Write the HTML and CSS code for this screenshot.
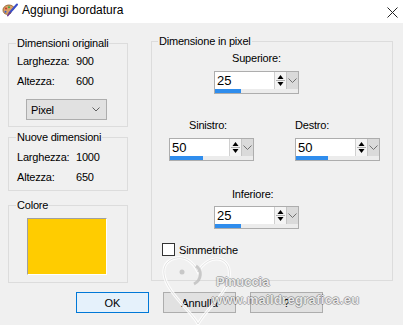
FILE: index.html
```html
<!DOCTYPE html>
<html lang="it">
<head>
    <meta charset="UTF-8">
    <meta name="viewport" content="width=device-width, initial-scale=1.0">
    <title>Aggiungi bordatura</title>
    <link rel="stylesheet" href="styles.css">
</head>
<body>
    <div class="dialog">
        <div class="titlebar">
            <svg class="app-icon" width="17" height="15" viewBox="0 0 17 15">
                <path d="M2 7c0-3 3-5 6-5 3 0 5 1.5 5 3.5 0 1.5-1.5 1.5-2.5 2-1 .5 0 2-1 3-1.5 1.5-7.5 1.5-7.5-3.5z" fill="#d9a066" stroke="#8a5a2b" stroke-width=".8"/>
                <circle cx="5" cy="5.5" r="1.1" fill="#d23b2a"/>
                <circle cx="8" cy="4.3" r="1" fill="#3aa640"/>
                <circle cx="4.5" cy="8.8" r="1" fill="#2e5fd0"/>
                <path d="M16 1.5L8.5 10" stroke="#3b4fc8" stroke-width="2" stroke-linecap="round"/>
                <path d="M9 9.5L6.8 12.6" stroke="#6b3a8c" stroke-width="1.6" stroke-linecap="round"/>
            </svg>
            <span class="title">Aggiungi bordatura</span>
            <svg class="close" width="11" height="11" viewBox="0 0 11 11">
                <path d="M0.5 0.5L10.5 10.5M10.5 0.5L0.5 10.5" stroke="#222" stroke-width="1"/>
            </svg>
        </div>

        <div class="main">
            <div class="left-col">
                <fieldset class="group group-orig">
                    <legend>Dimensioni originali</legend>
                    <div class="row"><span class="key">Larghezza:</span><span>900</span></div>
                    <div class="row"><span class="key">Altezza:</span><span>600</span></div>
                    <div class="combo">
                        <span>Pixel</span>
                        <svg width="8" height="5" viewBox="0 0 8 5"><path d="M0.5 0.5L4 4L7.5 0.5" fill="none" stroke="#606060"/></svg>
                    </div>
                </fieldset>

                <fieldset class="group group-new">
                    <legend>Nuove dimensioni</legend>
                    <div class="row"><span class="key">Larghezza:</span><span>1000</span></div>
                    <div class="row"><span class="key">Altezza:</span><span>650</span></div>
                </fieldset>

                <fieldset class="group group-color">
                    <legend>Colore</legend>
                    <div class="swatch"></div>
                </fieldset>
            </div>

            <fieldset class="group group-pixel">
                <legend>Dimensione in pixel</legend>

                <div class="side side-center">
                    <div class="lbl lbl-indent">Superiore:</div>
                    <div class="spin">
                        <div class="spin-top">
                            <span class="spin-value">25</span>
                            <span class="spin-arrows">
                                <svg width="9" height="15" viewBox="0 0 9 15"><path d="M4.5 2L1.5 6H7.5Z M4.5 13L1.5 9H7.5Z" fill="#000"/><path d="M0 7.5H9" stroke="#b0b0b0"/></svg>
                            </span>
                            <span class="spin-drop">
                                <svg width="9" height="5" viewBox="0 0 9 5"><path d="M0.5 0.5L4.5 4.5L8.5 0.5" fill="none" stroke="#707070"/></svg>
                            </span>
                        </div>
                        <div class="spin-track"><div class="spin-fill" style="width: 26px"></div></div>
                    </div>
                </div>

                <div class="side-pair">
                    <div class="side">
                        <div class="lbl lbl-left">Sinistro:</div>
                        <div class="spin">
                            <div class="spin-top">
                                <span class="spin-value">50</span>
                                <span class="spin-arrows">
                                    <svg width="9" height="15" viewBox="0 0 9 15"><path d="M4.5 2L1.5 6H7.5Z M4.5 13L1.5 9H7.5Z" fill="#000"/><path d="M0 7.5H9" stroke="#b0b0b0"/></svg>
                                </span>
                                <span class="spin-drop">
                                    <svg width="9" height="5" viewBox="0 0 9 5"><path d="M0.5 0.5L4.5 4.5L8.5 0.5" fill="none" stroke="#707070"/></svg>
                                </span>
                            </div>
                            <div class="spin-track"><div class="spin-fill" style="width: 33px"></div></div>
                        </div>
                    </div>
                    <div class="side">
                        <div class="lbl">Destro:</div>
                        <div class="spin">
                            <div class="spin-top">
                                <span class="spin-value">50</span>
                                <span class="spin-arrows">
                                    <svg width="9" height="15" viewBox="0 0 9 15"><path d="M4.5 2L1.5 6H7.5Z M4.5 13L1.5 9H7.5Z" fill="#000"/><path d="M0 7.5H9" stroke="#b0b0b0"/></svg>
                                </span>
                                <span class="spin-drop">
                                    <svg width="9" height="5" viewBox="0 0 9 5"><path d="M0.5 0.5L4.5 4.5L8.5 0.5" fill="none" stroke="#707070"/></svg>
                                </span>
                            </div>
                            <div class="spin-track"><div class="spin-fill" style="width: 32px"></div></div>
                        </div>
                    </div>
                </div>

                <div class="side side-center side-bottom">
                    <div class="lbl lbl-indent">Inferiore:</div>
                    <div class="spin">
                        <div class="spin-top">
                            <span class="spin-value">25</span>
                            <span class="spin-arrows">
                                <svg width="9" height="15" viewBox="0 0 9 15"><path d="M4.5 2L1.5 6H7.5Z M4.5 13L1.5 9H7.5Z" fill="#000"/><path d="M0 7.5H9" stroke="#b0b0b0"/></svg>
                            </span>
                            <span class="spin-drop">
                                <svg width="9" height="5" viewBox="0 0 9 5"><path d="M0.5 0.5L4.5 4.5L8.5 0.5" fill="none" stroke="#707070"/></svg>
                            </span>
                        </div>
                        <div class="spin-track"><div class="spin-fill" style="width: 26px"></div></div>
                    </div>
                </div>

                <label class="check">
                    <span class="box"></span>
                    <span>Simmetriche</span>
                </label>
            </fieldset>
        </div>

        <div class="buttons">
            <button class="btn btn-default">OK</button>
            <button class="btn">Annulla</button>
            <button class="btn">?</button>
        </div>

        <!-- watermark -->
        <div class="watermark">
            <svg class="wm-heart" width="80" height="75" viewBox="0 0 80 75">
                <path d="M40 72C34 60 8 40 6 22 4 8 20 2 30 8 36 12 38 16 40 20 44 12 54 4 64 8 76 14 72 32 62 44 54 54 46 62 40 72Z" fill="none" stroke="rgba(255,255,255,0.85)" stroke-width="3"/>
                <path d="M40 72C34 60 8 40 6 22 4 8 20 2 30 8 36 12 38 16 40 20 44 12 54 4 64 8 76 14 72 32 62 44 54 54 46 62 40 72Z" fill="none" stroke="rgba(0,0,0,0.1)" stroke-width="1"/>
                <circle cx="24" cy="20" r="2.5" fill="rgba(190,190,190,0.8)"/>
                <path d="M38 14C44 18 44 28 36 32" fill="none" stroke="rgba(190,190,190,0.8)" stroke-width="3"/>
            </svg>
            <div class="wm-name">Pinuccia</div>
            <div class="wm-site">www.maildregrafica.eu</div>
        </div>
    </div>
</body>
</html>
```

FILE: styles.css
```css
body {
    margin: 0;
    padding: 0;
    font-family: "Liberation Sans", Arial, sans-serif;
    font-size: 11px;
    color: #000;
    background-color: #f0f0f0;
}
.dialog {
    position: relative;
    width: 403px;
    height: 325px;
    overflow: hidden;
    background-color: #f0f0f0;
}
.titlebar {
    display: flex;
    align-items: flex-start;
    height: 23px;
    background-color: white;
}
.app-icon {
    margin: 3px 4px 0 1px;
}
.title {
    flex: 1;
    font-size: 12px;
    line-height: 15px;
    padding-top: 3px;
}
.close {
    margin: 7px 5px 0 0;
}
.main {
    display: flex;
    align-items: flex-start;
    gap: 23px;
    padding: 11px 0 0 8px;
}
.left-col {
    display: flex;
    flex-direction: column;
    width: 120px;
    margin-top: 2px;
}
.group {
    box-sizing: border-box;
    min-width: 0;
    margin: 0;
    border: 1px solid #dcdcdc;
    letter-spacing: -0.2px;
}
.group legend {
    padding: 0 1px;
    margin-left: 7px;
    line-height: 14px;
}
.row {
    display: flex;
    height: 14px;
    line-height: 14px;
    margin-left: 8px;
}
.row + .row {
    margin-top: 6px;
}
.key {
    width: 59px;
}
.group-orig {
    width: 120px;
    padding: 4px 0 6px 0;
}
.combo {
    box-sizing: border-box;
    display: flex;
    align-items: center;
    justify-content: space-between;
    width: 81px;
    height: 21px;
    margin: 11px 0 0 17px;
    padding: 0 6px 0 4px;
    background-color: #e1e1e1;
    border: 1px solid #adadad;
    line-height: 14px;
}
.group-new {
    width: 120px;
    margin-top: 3px;
    padding: 6px 0 6px 0;
}
.group-color {
    width: 120px;
    margin-top: 7px;
    padding: 6px 0 7px 0;
}
.swatch {
    box-sizing: border-box;
    width: 80px;
    height: 57px;
    margin-left: 18px;
    background-color: #ffcc00;
    border-top: 1px solid #a0a0a0;
    border-left: 1px solid #a0a0a0;
    border-right: 1px solid #fff;
    border-bottom: 1px solid #fff;
}
.group-pixel {
    width: 242px;
    padding: 0 0 24px 0;
}
.group-pixel legend {
    margin-left: 6px;
}
.side {
    display: flex;
    flex-direction: column;
    width: 85px;
}
.side-center {
    margin: 3px 0 0 62px;
}
.side-bottom {
    margin-top: 26px;
}
.side-pair {
    display: flex;
    gap: 41px;
    margin: 24px 0 0 17px;
}
.lbl {
    height: 14px;
    line-height: 14px;
    margin-bottom: 6px;
    white-space: nowrap;
}
.lbl-indent {
    padding-left: 18px;
}
.lbl-left {
    padding-left: 20px;
}
.side-bottom .lbl {
    margin-bottom: 5px;
}
.spin {
    box-sizing: border-box;
    width: 85px;
    height: 23px;
    border: 1px solid #adadad;
    background-color: white;
    letter-spacing: 0;
}
.spin-top {
    display: flex;
    height: 17px;
}
.spin-value {
    flex: 1;
    padding-left: 2px;
    font-size: 13px;
    line-height: 17px;
}
.spin-arrows {
    display: flex;
    align-items: center;
    width: 11px;
    justify-content: center;
    background-color: #f4f4f4;
    border-left: 1px solid #d0d0d0;
}
.spin-drop {
    display: flex;
    align-items: center;
    justify-content: center;
    width: 11px;
    background-color: #dadada;
    border-left: 1px solid #c4c4c4;
}
.spin-track {
    height: 4px;
    background-color: #ececec;
}
.spin-fill {
    height: 4px;
    background-color: #2f8ded;
}
.check {
    display: flex;
    align-items: center;
    gap: 4px;
    margin: 14px 0 0 10px;
    height: 13px;
    line-height: 14px;
}
.check .box {
    box-sizing: border-box;
    width: 13px;
    height: 13px;
    border: 1px solid #333;
    background-color: white;
}
.buttons {
    display: flex;
    gap: 14px;
    margin-top: 9px;
    padding-left: 76px;
}
.btn {
    box-sizing: border-box;
    width: 73px;
    height: 21px;
    padding: 0;
    font-family: "Liberation Sans", Arial, sans-serif;
    font-size: 11px;
    color: #000;
    background-color: #e1e1e1;
    border: 1px solid #adadad;
}
.btn-default {
    background-color: #e5f1fb;
    border-color: #0078d7;
}
/* Watermark */
.watermark {
    position: absolute;
    left: 0;
    top: 0;
    width: 403px;
    height: 325px;
    pointer-events: none;
}
.wm-heart {
    position: absolute;
    left: 158px;
    top: 252px;
}
.wm-name,
.wm-site {
    position: absolute;
    font-weight: bold;
    font-size: 13px;
    color: rgba(255, 255, 255, 0.85);
    text-shadow: 1px 0 0 rgba(0, 0, 0, 0.25), -1px 0 0 rgba(0, 0, 0, 0.25), 0 1px 0 rgba(0, 0, 0, 0.25), 0 -1px 0 rgba(0, 0, 0, 0.25);
}
.wm-name {
    left: 216px;
    top: 274px;
}
.wm-site {
    left: 212px;
    top: 292px;
    letter-spacing: 0.3px;
}
```
